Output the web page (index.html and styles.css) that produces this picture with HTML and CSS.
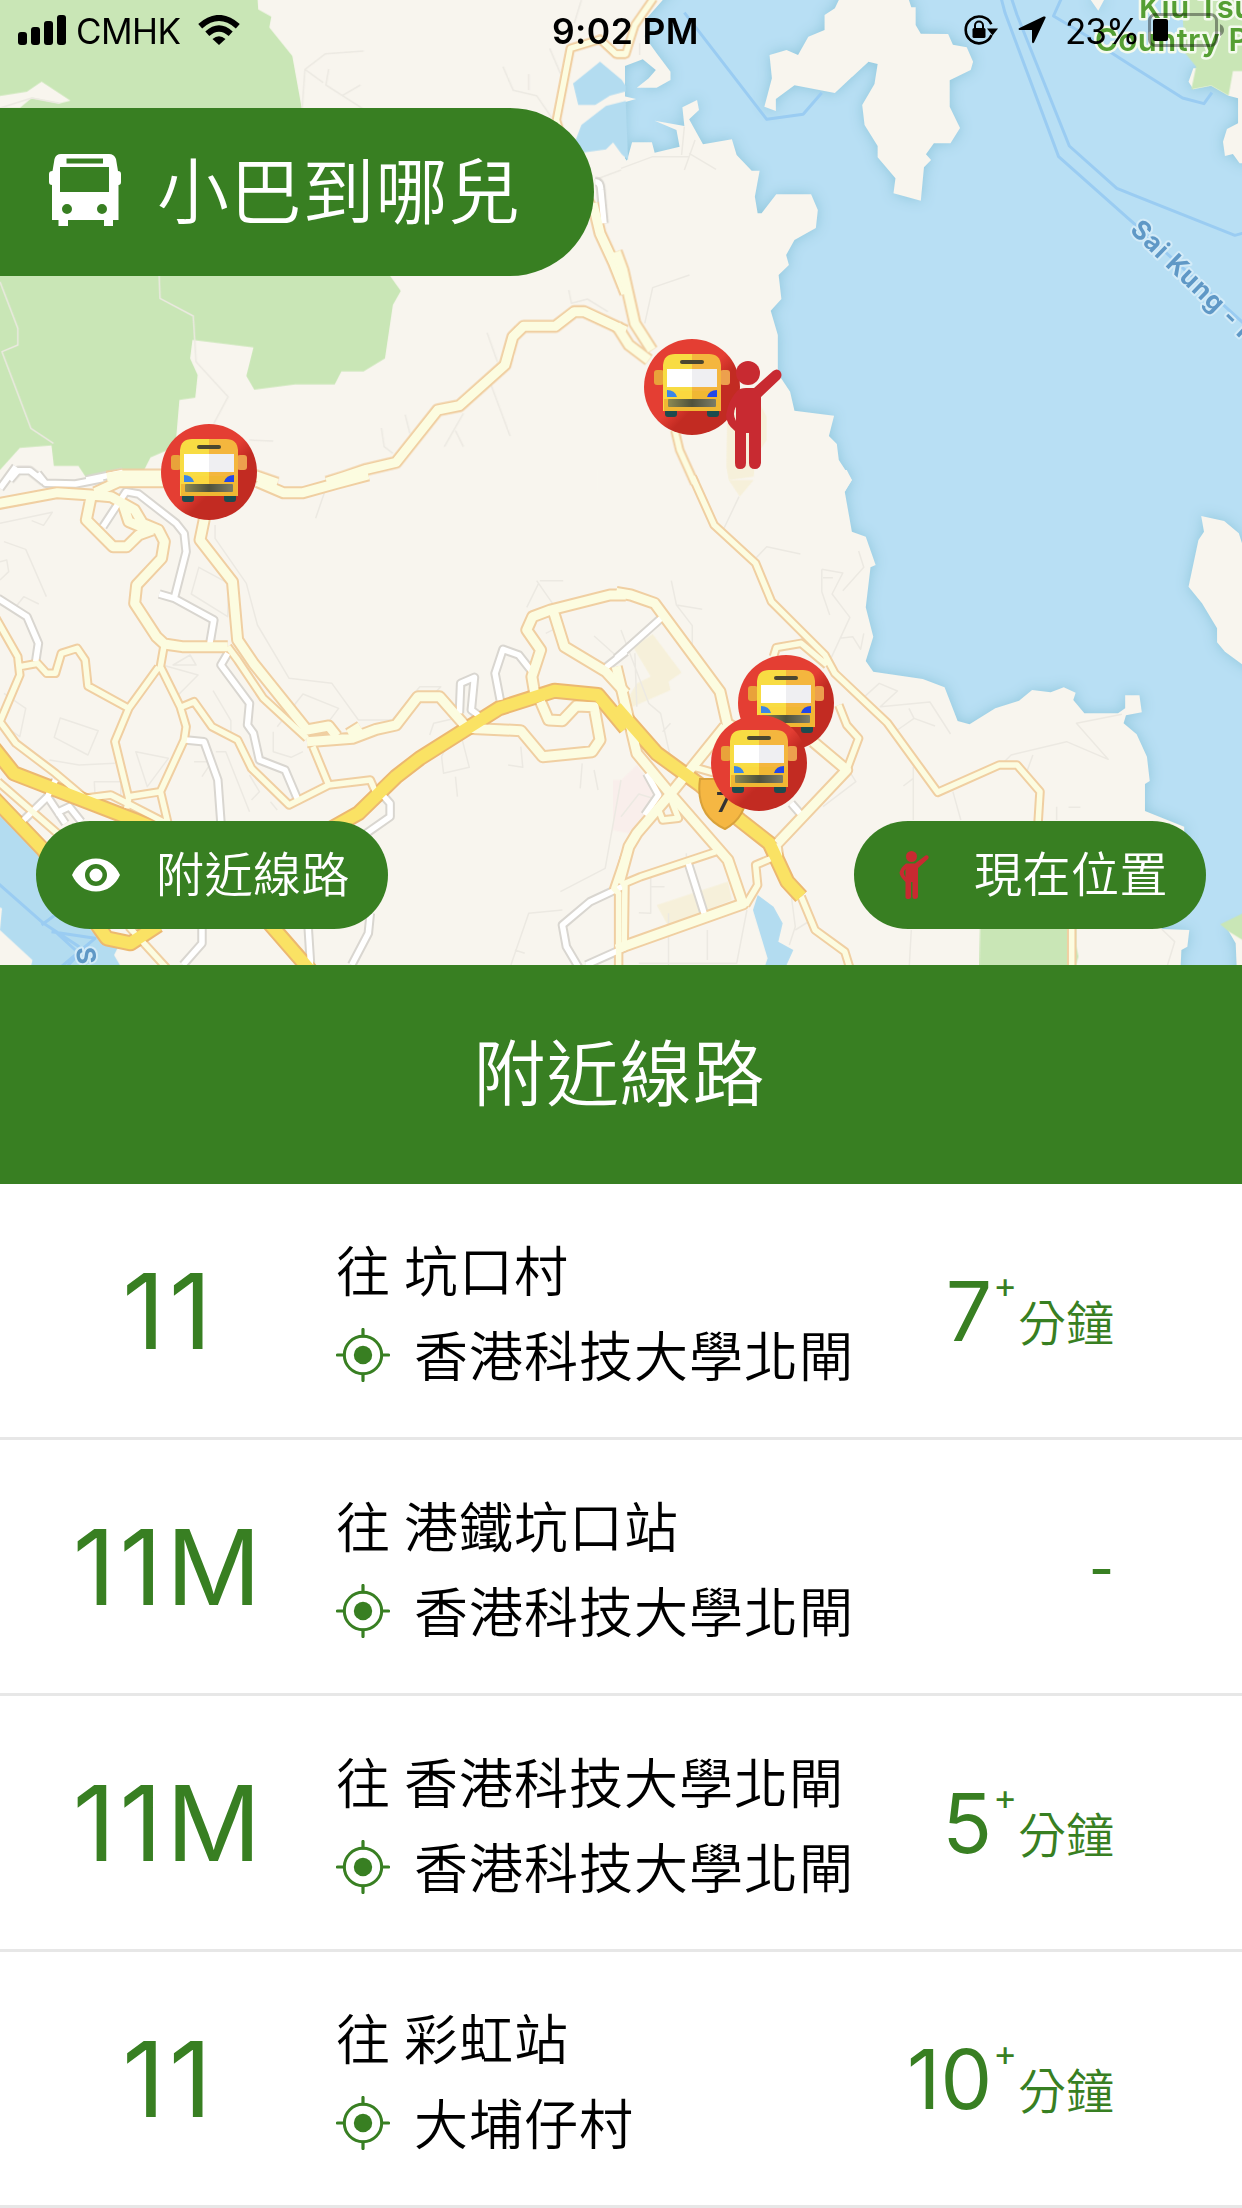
FILE: index.html
```html
<!DOCTYPE html>
<html lang="zh-Hant">
<head>
<meta charset="utf-8">
<title>小巴到哪兒</title>
<link rel="stylesheet" href="styles.css">
</head>
<body>
<svg class="sprite" width="0" height="0" aria-hidden="true">
  <defs>
    <linearGradient id="disc" x1="0" y1="0" x2="1" y2="1">
      <stop offset="0.5" stop-color="#e43e33"/>
      <stop offset="0.62" stop-color="#c22b22"/>
    </linearGradient>
    <linearGradient id="grille" x1="0" y1="0" x2="1" y2="0">
      <stop offset="0" stop-color="#8b8a52"/>
      <stop offset="0.5" stop-color="#4f513c"/>
      <stop offset="1" stop-color="#7d7d68"/>
    </linearGradient>
    <symbol id="bus-pin" viewBox="0 0 96 96">
      <circle cx="48" cy="48" r="48" fill="url(#disc)"/>
      <path d="M20 24Q22 15 32 15H64Q74 15 76 24L62 50H20Z" fill="#df2f31"/>
      <rect x="10" y="31" width="10" height="15" rx="3" fill="#e9a23a"/>
      <rect x="76" y="31" width="10" height="15" rx="3" fill="#eda04d"/>
      <rect x="21" y="70" width="12" height="8" rx="3" fill="#1d4b4e"/>
      <rect x="63" y="70" width="12" height="8" rx="3" fill="#1d4b4e"/>
      <path d="M19 26Q20 15 31 15H48V72H19Z" fill="#f8dc43"/>
      <path d="M48 15H65Q76 15 77 26V72H48Z" fill="#f4b63e"/>
      <path d="M20 52H76V72H20Z" fill="#f0b733"/>
      <path d="M20 52H48V60H20Z" fill="#fbd83f"/>
      <rect x="36" y="21" width="24" height="4" rx="2" fill="#4b4730"/>
      <rect x="23" y="30" width="25" height="18" fill="#fff"/>
      <rect x="48" y="30" width="25" height="18" fill="#efeff2"/>
      <path d="M23 51Q31 51 33 58H23Z" fill="#3a86e8"/>
      <path d="M73 51Q65 51 63 58H73Z" fill="#2247ea"/>
      <rect x="24" y="60" width="48" height="8" rx="1" fill="url(#grille)"/>
    </symbol>
    <symbol id="person" viewBox="0 0 56 108">
      <circle cx="22" cy="12" r="12"/>
      <path d="M11 30Q14 27 20 27H28L47 10Q51 7 54 10Q57 14 54 18L35 36V102Q34 108 29 108Q23 108 23 102V72H20V102Q20 108 14 108Q9 108 9 102V70Q0 63 0 54Q2 40 11 30ZM10 45Q6 53 10 60Z" fill-rule="evenodd"/>
    </symbol>
    <symbol id="target" viewBox="0 0 54 54">
      <circle cx="27" cy="27" r="18.7" fill="none" stroke="currentColor" stroke-width="3"/>
      <circle cx="27" cy="27" r="9.2" fill="currentColor"/>
      <path d="M27 1.5V8M27 46v6.5M1.5 27H8M46 27h6.5" stroke="currentColor" stroke-width="3.2" stroke-linecap="round"/>
    </symbol>

    <!-- Road network, one group per map tile -->
    <g id="roads-nw">
      <path class="local" d="M1503 545Q1516 545 1517 570L1525 670M25 1440L45 1412H75L110 1445M218 1440L310 1417"/>
      <path class="minor" d="M1580 162H1555L1515 118L1440 145L1405 360L1440 500L1497 620"/>
      <path class="major" d="M1497 610L1515 700L1550 790L1580 880M270 1432L310 1425H430M640 1425L700 1450M825 1447L870 1430L925 1408L1000 1387L1105 1230L1160 1217L1275 1095L1295 1010L1322 979H1402L1450 935H1475L1580 993"/>
    </g>
    <g id="roads-ne">
      <path class="minor" d="M-12 162H12L35 75L82 -5M136 1290L148 1350L186 1450"/>
      <path class="major" d="M-12 755L5 810L35 970L78 1050M-12 975L20 1035L70 1080"/>
    </g>
    <g id="roads-sw">
      <path class="local" d="M0 25L40 -40M95 -20L115 10L190 12L260 -4M-5 355L68 410L97 490L90 545M260 140L318 35L350 42L445 130L465 160L470 215L440 355M402 342L440 355L540 420L530 490M575 520L558 555L630 670L625 735L640 760L655 840L720 870L755 968M470 780L515 785L550 900L558 1030M1160 700L1163 610L1198 592L1190 690L1215 712M1263 660L1250 580L1270 508L1310 525L1345 578M1580 515L1530 562M955 930L985 970V1010L925 1060M1580 1215L1490 1265L1420 1335L1430 1400L1470 1480M1480 1455L1580 1402M510 1340V1390L462 1455M778 1340L785 1470M935 1300L930 1360L888 1455M60 1020L120 950L165 1030M140 1000L175 980L205 1025M120 950L140 900"/>
      <path class="minor" d="M-10 415L45 530L50 585L0 725L40 790L140 880L215 955L280 945L330 975L420 1030M50 560L95 550L118 580H140L155 520L195 505L215 540L222 618L325 685L290 785L325 955L320 985M415 492L405 560L455 680L470 740L465 780L405 935L425 1035M400 562L325 685M325 950L405 935M460 680L490 665L535 740L600 780L635 865L730 975L830 915L790 800M830 915L935 900L950 940M-5 905L145 1060M325 1340L425 1470M1580 1120L1550 1225L1562 1240V1480M575 500L600 540L665 655L775 775"/>
      <path class="major" d="M-10 72L145 38L230 45L280 50L340 90L360 130L400 150L415 185L408 235L345 315L340 370L395 470L415 492L460 500H575M230 50L218 120L285 200H320L350 165L385 150M310 70L325 125L365 145M240 38L300 5H430M650 5L715 38H765L850 10L930 -15M518 105L505 180L587 305L600 480L640 550L775 750L830 738L850 768M775 785L890 775L950 748L1000 735L1055 650H1110L1180 745L1315 752L1370 830L1495 815L1515 780L1500 680L1455 678L1420 722L1385 720L1365 665M880 762L910 740M1350 640L1343 590L1365 510L1330 450L1345 410L1390 390L1540 345H1580M1395 385L1425 500L1530 575L1580 640"/>
      <path class="highway" d="M-15 805L35 880L340 1020L430 1065M830 1050L905 1000L1000 890L1060 835L1260 685L1400 632L1510 645L1580 745M-15 955L110 1110L270 1375L330 1390L400 1335M680 1330L790 1480"/>
    </g>
    <g id="roads-se">
      <path class="local" d="M-12 535L115 400M170 1150L210 1300M430 970L452 1000M65 880L95 945L60 1005"/>
      <path class="minor" d="M180 -10L235 135L340 250L380 365L515 525L540 580L672 728L800 937L955 855H1000L1058 935L1053 1030M1138 1340V1480M385 530L392 503L455 490L520 555M455 1250L490 1350L565 1415L582 1480M550 675L570 735L600 775L570 870M95 990L105 1020L145 1015L125 955M0 1215L50 1190L240 1115M10 1215L8 1400M395 1090L400 1125L340 1155L345 1215L315 1275M180 860L240 880"/>
      <path class="major" d="M-12 337L25 345L85 370L250 635L268 730L290 745M-12 560L40 820L120 935L270 1140L308 1272L-12 1407M395 1090L570 870L485 785M262 740L130 935L40 1060L20 1100L-5 1210"/>
      <path class="highway" d="M-12 682L90 820L200 915L300 1020L375 1090L420 1205L455 1250"/>
    </g>
  </defs>
</svg>

<section class="map">
  <svg class="map-canvas" viewBox="0 0 1242 965" aria-hidden="true">
    <rect class="sea" width="1242" height="965"/>
    <g class="land">
      <rect x="-30" y="-30" width="655" height="1030"/>
      <g transform="translate(621 0) scale(.39605 .33333)">
        <path d="M-60 -60H150L65 55L60 110L90 160L125 215V240L90 263H40L70 235L88 210L55 178L5 200L10 255L-60 230V270L38 297L-60 330V460H0L15 482L28 427H78L85 458L148 440L140 390L85 362L160 378L155 322L192 300L197 330L172 358L207 433L280 418L292 465L330 512H350L338 590L345 640H355L392 583H480L497 630L492 684L438 720L417 765L424 795L398 825L405 897L378 932L396 1005V1120L427 1175L438 1232L538 1247L525 1308L545 1332L550 1380L583 1440L565 1475H-60Z"/>
        <path d="M550 0L540 25L514 45V90L473 110L447 165L418 150L375 165L381 235L362 320L391 333V297L438 256L540 279L625 185L648 192L640 252L609 315L615 375L648 438V472L693 535L688 580L757 602L765 502L783 480L770 463L790 430H832L856 384L830 320V241L883 210L889 185L873 142L838 134L826 102L757 101L744 75V22H733L727 0V-30H550Z"/>
        <path d="M1183 -5L1205 32L1222 -5ZM1445 205L1433 245L1445 268L1490 257L1534 287L1558 295V370L1530 387L1520 425L1525 468L1545 462L1562 490H1640V200Z"/>
      </g>
      <g transform="translate(621 480) scale(.39605 .33333)">
        <path d="M-60 -30H570L583 0L565 35L583 155L618 170L643 255L630 262L618 382L637 470L618 543L637 575L762 597L817 622L850 723L880 733L945 685L1005 662L1038 630L1085 637L1118 622L1148 638L1142 660L1170 700H1255L1273 685V646H1309L1315 697L1275 706L1269 730L1302 763L1328 830L1335 903L1323 912V993L1422 1040V1100L1365 1347L1435 1350L1430 1400L1415 1410L1410 1530H-60Z"/>
        <path d="M1465 108L1523 123L1560 160L1568 190H1640V590L1568 553L1525 515L1505 487V445L1467 370L1433 320L1458 180L1472 155ZM1530 1345L1552 1390L1557 1530H1640V1340Z"/>
      </g>
    </g>
    <g class="park">
      <path transform="scale(.39605 .33333)" d="M-10 -10H650L652 28L685 50L680 82L738 168L762 325L900 700L985 828L1012 873L992 915L972 1075L918 1114H862L845 1153H745L642 1169L622 1128L640 1042L486 1020L480 1075L499 1125L493 1193L453 1200L443 1340L380 1372L363 1412L218 1434L198 1398H136L130 1336L50 1344L0 1410H-10V324H50L80 294L150 310L178 302L105 245L68 275L0 288H-10Z"/>
      <path transform="translate(621 0) scale(.39605 .33333)" d="M1432 -5L1420 60L1425 160L1452 200L1440 268L1490 257L1534 287L1545 213H1580V-5Z"/>
      <path transform="translate(621 480) scale(.39605 .33333)" d="M907 1340H1150V1400L1155 1430L1145 1470H905ZM1513 1333L1575 1297V1384L1535 1355Z"/>
    </g>
    <g class="water">
      <path transform="scale(.39605 .33333)" d="M1515 185L1570 240L1580 258V274L1540 287L1503 315H1460L1447 250ZM1580 303L1530 318L1468 375L1452 425L1475 457L1530 448L1548 427L1570 463L1586 480Z"/>
      <path transform="translate(0 480) scale(.39605 .33333)" d="M-5 1000L100 1120L230 1350L265 1390L305 1385L288 1425L305 1460H78L82 1440L0 1350L5 1285L-5 1280Z"/>
      <path transform="translate(621 480) scale(.39605 .33333)" d="M345 1245L385 1280L408 1330L397 1385L435 1410L412 1470H360L370 1435L333 1290Z"/>
    </g>
    <g class="district" transform="translate(621 480) scale(.39605 .33333)">
      <path d="M30 500L80 462L153 578L120 605L125 630L20 685V650L40 610L75 590ZM90 1275L270 1205L280 1260L120 1340ZM272 0H335L300 50Z"/>
      <path d="M268 -200L300 -260L350 -230L368 -190V-120L340 -70L335 -10L272 0L266 -40Z"/>
      <path class="hospital" d="M-20 900L0 900L40 855L95 945L20 1060L-20 1050Z"/>
    </g>
    <g class="track">
      <path transform="scale(.39605 .33333)" d="M0 845L45 985V1035L5 1055L78 1285L135 1330M402 828L404 895L488 948L495 1085L576 1190L540 1270M918 153L822 161L770 208L763 325M770 208L816 248M830 207L823 255L915 325M865 286L910 255M1270 200L1296 271L1355 287L1400 365M1335 222V270M1388 145L1415 220M1468 0L1450 70M1230 998L1256 1085M1240 1155L1288 1308M1170 1240L1122 1340M1150 1292L1170 1340M963 1284L970 1340L992 1360M1023 1244L1035 1300M1436 870L1443 910L1483 897L1535 935M1500 540L1568 510M630 1320L690 1323M0 324L80 294L150 310"/>
      <path transform="translate(621 0) scale(.39605 .33333)" d="M0 505L80 470H172L160 510M172 460L240 508M160 380L153 465M173 825L80 863L60 970M47 130V165M187 420L172 470"/>
      <path transform="translate(0 480) scale(.39605 .33333)" d="M0 130L132 97L110 136L80 122M10 185L65 208L117 350M0 245L17 240L22 275L0 300M830 0L797 115M543 135V175L622 310L650 435L730 595L838 610L905 720H990L1060 620H1113L1085 655M502 262L577 310L575 410L483 342ZM152 714L248 752L222 825L137 772ZM343 815L425 835L372 920ZM437 555L480 525L495 555ZM1363 302H1422M1355 302L1395 370M1360 310L1330 382M1378 460L1412 440M1500 468L1568 540M700 740L765 642L855 685L830 725M690 755V815L735 832L765 815M538 632L583 722V770M410 555L500 585L450 645M10 640L65 685L50 770L20 745M125 840L200 855L290 850M238 905H305V945H240ZM545 815H570L630 995M490 845H535L510 890M630 885L655 935L635 960M1150 740L1115 830L1120 880L1185 862L1165 770M1085 765L1095 730L1150 715M1150 890L1155 950M1283 855L1320 862L1315 800M1470 850L1465 925M1500 870L1510 930M1415 1235L1528 1165L1568 900M1290 1455L1335 1300L1420 1290M1300 1410L1325 1420M40 380L60 350L98 372M683 965L700 990"/>
      <path transform="translate(621 480) scale(.39605 .33333)" d="M298 50L258 150M340 235L368 200L453 222M127 302L140 375L205 388M140 375L180 437V535M600 213L613 262L560 332M507 268L560 279L533 342L578 412L530 535M507 268V335L527 405M510 293H535M552 475L585 470L605 508L613 460M615 650L652 610L698 633L655 680L780 666L832 762M727 685L740 715L793 738M740 715L698 750M1265 703L1150 730L1230 838L1125 785L985 825L955 860M738 860V1020M713 918L738 895M838 935L858 1020M1100 980V1020M1130 982H1160M1040 825L1020 890M0 450L70 670L100 700L130 860M35 520L40 680M125 730L105 755M75 1190V1300L45 1298M120 1300V1455M218 1350V1440M318 1290L292 1450H45M425 1200L440 1340L425 1395M440 1350L480 1320M733 1350L728 1455M1365 1347L1398 1385L1380 1455M75 1220H110M165 1120V1160M510 980L593 905L580 880M0 1010L45 942L80 955"/>
    </g>
    <g class="ferry">
      <path transform="translate(621 0) scale(.39605 .33333)" d="M160 38L368 358L460 343L507 278M960 -5L970 40L1105 470L1290 665L1600 1000M986 -5L1000 45L1132 438L1252 565L1550 706L1575 698M1112 -5L1092 48L1180 110L1240 160L1418 294L1472 311L1492 278"/>
      <path transform="translate(0 480) scale(.39605 .33333)" d="M-5 1210L110 1330L200 1400M105 1335L145 1300M130 1355L240 1375L145 1470M135 1350L190 1410M225 1390L165 1465"/>
    </g>
    <g class="road-casing">
      <use href="#roads-nw" transform="scale(.39605 .33333)"/>
      <use href="#roads-ne" transform="translate(621 0) scale(.39605 .33333)"/>
      <use href="#roads-sw" transform="translate(0 480) scale(.39605 .33333)"/>
      <use href="#roads-se" transform="translate(621 480) scale(.39605 .33333)"/>
    </g>
    <g class="road-surface">
      <use href="#roads-nw" transform="scale(.39605 .33333)"/>
      <use href="#roads-ne" transform="translate(621 0) scale(.39605 .33333)"/>
      <use href="#roads-sw" transform="translate(0 480) scale(.39605 .33333)"/>
      <use href="#roads-se" transform="translate(621 480) scale(.39605 .33333)"/>
    </g>
    <path class="shield" d="M700 779H746Q751 815 725 829Q695 815 700 779Z"/>
    <text class="shield-number" x="716" y="812">7</text>
    <text class="label-park" x="1139" y="18">Kiu Tsui</text>
    <text class="label-park" x="1095" y="51">Country Park</text>
    <text class="label-sea" transform="translate(1129 231) rotate(44)">Sai Kung - Kau Sai</text>
    <text class="label-sea" transform="translate(76 948) rotate(84)">Sam</text>
  </svg>

  <svg class="pin pin-west"><use href="#bus-pin"/></svg>
  <svg class="pin pin-north"><use href="#bus-pin"/></svg>
  <svg class="pin pin-east"><use href="#bus-pin"/></svg>
  <svg class="pin pin-south"><use href="#bus-pin"/></svg>
  <svg class="me"><use href="#person"/></svg>

  <header class="status">
    <div class="status-left">
      <svg class="signal" viewBox="0 0 49 30"><rect y="17" width="9" height="13" rx="3"/><rect x="13" y="12" width="9" height="18" rx="3"/><rect x="26" y="6" width="9" height="24" rx="3"/><rect x="39" y="0" width="9" height="30" rx="3"/></svg>
      <span class="carrier">CMHK</span>
      <svg class="wifi" viewBox="0 0 42 30"><g fill="none" stroke="#000" stroke-width="6"><path d="M2.2 11.2Q21-5.2 39.800 11.200"/><path d="M9.300 18.700Q21 8.300 32.700 18.700"/></g><path d="M14.500 24Q21 18.500 27.500 24L21 30Z"/></svg>
    </div>
    <span class="clock">9:02 PM</span>
    <div class="status-right">
      <svg class="lock" viewBox="0 0 34 30"><path d="M27.500 20A13.400 13.400 0 1 1 27.300 9.300" fill="none" stroke="#000" stroke-width="2.600"/><path d="M23 13.500H34L28.500 20.500Z"/><rect x="8.500" y="13" width="13" height="10" rx="1.500"/><path d="M11 14V10.500A4 4 0 0 1 19 10.500V14" fill="none" stroke="#000" stroke-width="2"/></svg>
      <svg class="arrow" viewBox="0 0 28 28"><path d="M27 .5Q28 1 27.500 2L16 26.500Q14.500 28 14 26V14H1.500Q-.5 13 1.500 12L25.500 .5Z"/></svg>
      <span class="percent">23%</span>
      <svg class="battery" viewBox="0 0 77 34"><rect x="1.500" y="1.500" width="67" height="31" rx="6" fill="none" stroke="#000" stroke-opacity=".38" stroke-width="3"/><rect x="5" y="6" width="15" height="22" rx="2"/><path d="M72 11Q76 13 76 17T72 23Z" fill-opacity=".4"/></svg>
    </div>
  </header>

  <h1 class="brand">
    <svg class="brand-icon" viewBox="0 0 72 72"><path fill-rule="evenodd" d="M12 0H60Q65 0 67 5L69 17Q72 17 72 20V28Q72 31 69.500 31V66H64V72H55V66H19V72H9.500V66H3V31Q0 31 0 28V20Q0 17 3.500 17L5.500 5Q7 0 12 0ZM17.500 4.500V9.500H54V4.500ZM11 13V38H60V13ZM18 50A5 5 0 1 0 18 60A5 5 0 1 0 18 50ZM53 50A5 5 0 1 0 53 60A5 5 0 1 0 53 50Z"/></svg>
    <span class="brand-name">小巴到哪兒</span>
  </h1>

  <nav class="actions">
    <button class="pill"><svg class="pill-icon" viewBox="0 0 48 48"><path fill-rule="evenodd" d="M24 7.500C13 7.500 4.500 14 0 24C4.500 34 13 40.500 24 40.500S43.500 34 48 24C43.500 14 35 7.500 24 7.500ZM24 13A11 11 0 1 1 24 35A11 11 0 1 1 24 13ZM24 17.500A6.500 6.500 0 1 0 24 30.500A6.500 6.500 0 1 0 24 17.500Z"/></svg><span class="pill-text">附近線路</span></button>
    <button class="pill"><svg class="pill-icon pill-person" viewBox="0 0 48 48"><circle cx="21.500" cy="5.500" r="5.500"/><path fill-rule="evenodd" d="M16 12.500H25L35.500 4.500Q37.500 3.800 38.500 5.500Q39 7 38 8L28 17V46Q27.500 48 25 48Q22.500 48 22.500 46V31H21V46Q21 48 18.500 48Q15.500 48 15.500 46V31Q9.500 25 9.500 21.500Q10.500 17 16 12.500ZM15.500 18Q12 21 15.500 26Z"/></svg><span class="pill-text">現在位置</span></button>
  </nav>
</section>

<main>
  <h2 class="heading">附近線路</h2>
  <ul class="routes">
    <li class="route">
      <span class="number">11</span>
      <div class="detail"><p class="line">往 坑口村</p><p class="line stop"><svg class="target"><use href="#target"/></svg>香港科技大學北閘</p></div>
      <p class="eta"><span class="minutes">7</span><span class="plus">+</span><span class="unit">分鐘</span></p>
    </li>
    <li class="route">
      <span class="number">11M</span>
      <div class="detail"><p class="line">往 港鐵坑口站</p><p class="line stop"><svg class="target"><use href="#target"/></svg>香港科技大學北閘</p></div>
      <p class="eta"><span class="none">-</span></p>
    </li>
    <li class="route">
      <span class="number">11M</span>
      <div class="detail"><p class="line">往 香港科技大學北閘</p><p class="line stop"><svg class="target"><use href="#target"/></svg>香港科技大學北閘</p></div>
      <p class="eta"><span class="minutes">5</span><span class="plus">+</span><span class="unit">分鐘</span></p>
    </li>
    <li class="route">
      <span class="number">11</span>
      <div class="detail"><p class="line">往 彩虹站</p><p class="line stop"><svg class="target"><use href="#target"/></svg>大埔仔村</p></div>
      <p class="eta"><span class="minutes">10</span><span class="plus">+</span><span class="unit">分鐘</span></p>
    </li>
  </ul>
</main>
</body>
</html>
```
FILE: styles.css
```css
:root {
  --green: #387f22;
  --cjk: "Noto Sans CJK TC", sans-serif;
}

* { box-sizing: border-box; }

body {
  margin: 0;
  width: 1242px;
  background: #fff;
  color: #000;
  font-family: Inter, var(--cjk);
}

h1, h2, p, ul { margin: 0; padding: 0; font-weight: 400; }
.sprite { position: absolute; }

/* Map */
.map {
  position: relative;
  display: flex;
  flex-direction: column;
  height: 965px;
  overflow: hidden;
}
.map-canvas { position: absolute; inset: 0; width: 1242px; height: 965px; }
.sea { fill: #b8dff4; }
.land { fill: #f8f5ee; filter: drop-shadow(0 0 7px #8fc6da); }
.park { fill: #c9e6b6; }
.water { fill: #b3dcf0; }
.district { fill: #f6f0da; }
.hospital { fill: #f9eeeb; }

.track path, .ferry path, #roads-nw path, #roads-ne path, #roads-sw path, #roads-se path {
  fill: none;
  vector-effect: non-scaling-stroke;
  stroke-linejoin: round;
}
.track { stroke: #ece9e2; stroke-width: 1.5px; }
.ferry { stroke: #9accf2; stroke-width: 3px; }

.road-casing { --edge: 4px; --local: #d9d6d0; --road: #f0cfa2; --highway: #ecb870; }
.road-surface { --edge: 0px; --local: #fff; --road: #fcfce0; --highway: #fae264; }
.local { stroke: var(--local); stroke-width: calc(5.5px + var(--edge)); }
.minor { stroke: var(--road); stroke-width: calc(5.5px + var(--edge)); }
.major { stroke: var(--road); stroke-width: calc(9px + var(--edge)); }
.highway { stroke: var(--highway); stroke-width: calc(12px + var(--edge)); }

.shield { fill: #f5b743; stroke: #d9a13a; stroke-width: 2px; }
.shield-number { font: 600 27px Inter, sans-serif; fill: #333; }
.label-park, .label-sea {
  font: 600 31px Inter, sans-serif;
  paint-order: stroke;
  stroke-linejoin: round;
}
.label-park { letter-spacing: 0.5px; fill: #559f33; stroke: #f4faee; stroke-width: 5px; }
.label-sea { font-size: 26px; font-weight: 700; letter-spacing: 1px; fill: #5f98c6; stroke: #d3ebf8; stroke-width: 4px; }

.pin { position: absolute; width: 96px; height: 96px; }
.pin-west { left: 161px; top: 424px; }
.pin-north { left: 644px; top: 339px; }
.pin-east { left: 738px; top: 655px; }
.pin-south { left: 711px; top: 715px; }
.me { position: absolute; left: 724px; top: 361px; width: 60px; height: 108px; fill: #c82a31; }

/* Status bar */
.status {
  position: relative;
  display: grid;
  grid-template-columns: 1fr auto 1fr;
  align-items: center;
  height: 60px;
  padding: 0 17px 0 18px;
  font-size: 35px;
}
.status-left, .status-right { display: flex; align-items: center; }
.status-right { justify-content: flex-end; }
.signal { width: 49px; height: 30px; margin-right: 9px; }
.carrier { width: 104px; padding-top: 2px; letter-spacing: -0.6px; }
.wifi { width: 42px; height: 30px; margin-left: 18px; }
.clock { padding: 2px 0 0 8px; font-weight: 600; font-size: 35.500px; letter-spacing: 0.4px; }
.lock { width: 34px; height: 30px; margin-right: 20px; }
.arrow { width: 28px; height: 28px; margin-right: 19px; }
.percent { width: 74px; padding-top: 2px; letter-spacing: -1px; }
.battery { width: 77px; height: 34px; margin-left: 9px; }

/* Floating controls */
.brand {
  position: relative;
  display: flex;
  align-items: center;
  gap: 36px;
  width: 594px;
  height: 168px;
  margin-top: 48px;
  padding: 0 0 4px 49px;
  border-radius: 0 84px 84px 0;
  background: var(--green);
  color: #fff;
  font: 350 72px/1 var(--cjk);
  letter-spacing: 0.800px;
}
.brand-icon { width: 72px; height: 72px; fill: #fff; }
.brand-name { margin-top: -6px; }
.actions {
  position: relative;
  display: flex;
  justify-content: space-between;
  margin-top: auto;
  padding: 36px;
}
.pill {
  display: flex;
  align-items: center;
  gap: 36px;
  width: 352px;
  height: 108px;
  padding: 0 36px;
  border: 0;
  border-radius: 54px;
  background: var(--green);
  color: #fff;
  font: 350 48px/1 var(--cjk);
  letter-spacing: 0.500px;
  white-space: nowrap;
}
.pill-text { margin-top: -8px; }
.pill-icon { flex: none; width: 48px; height: 48px; fill: #fff; }
.pill-person { fill: #c82a31; }

/* Nearby routes */
.heading {
  display: flex;
  align-items: center;
  justify-content: center;
  height: 219px;
  padding: 0 3px 11px 0;
  background: var(--green);
  color: #fff;
  font: 350 72px/1 var(--cjk);
  letter-spacing: 1px;
}
.routes { list-style: none; }
.route {
  display: grid;
  grid-template-columns: 336px 520px 258px;
  align-items: center;
  height: 256px;
  border-bottom: 3px solid #e7e7e7;
}
.number {
  padding-left: 2px;
  text-align: center;
  color: var(--green);
  font-size: 105px;
  letter-spacing: 4px;
  line-height: 1;
}
.detail { display: grid; gap: 5px; padding-top: 3px; }
.line {
  display: flex;
  align-items: center;
  height: 80px;
  padding-bottom: 3px;
  font: 350 54px/77px var(--cjk);
  letter-spacing: 1px;
  white-space: pre;
}
.stop { gap: 24px; }
.target { width: 54px; height: 54px; margin-top: 3px; color: var(--green); }
.eta {
  display: flex;
  align-items: baseline;
  justify-content: flex-end;
  padding-top: 3px;
  color: var(--green);
}
.minutes { font-size: 82px; line-height: 100px; }
.plus { align-self: flex-start; margin: 5px 1px 0 1px; font-size: 36px; line-height: 36px; }
.unit { font: 350 48px/1 var(--cjk); }
.none { padding-top: 2px; font-size: 54px; font-weight: 500; line-height: 80px; }
```
